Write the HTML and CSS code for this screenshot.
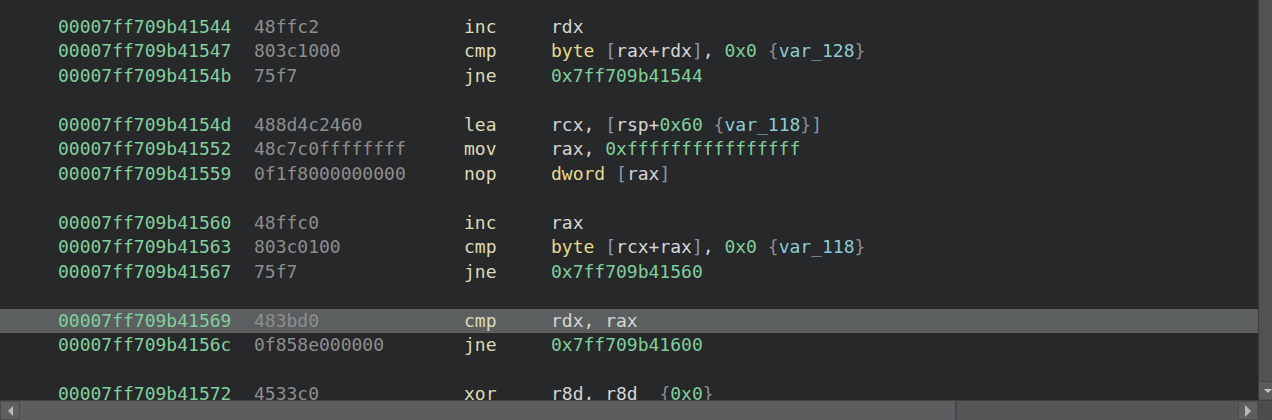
FILE: index.html
```html
<!DOCTYPE html>
<html>
<head>
<meta charset="utf-8">
<link rel="stylesheet" href="styles.css">
</head>
<body>
<div class="app">
  <div class="main">
    <div class="listing">
      <div class="row"><span class="addr">00007ff709b41544</span><span class="bytes">48ffc2</span><span class="mn">inc</span><span class="ops"><span class="reg">rdx</span></span></div>
      <div class="row"><span class="addr">00007ff709b41547</span><span class="bytes">803c1000</span><span class="mn">cmp</span><span class="ops"><span class="kw">byte</span> <span class="br">[</span><span class="reg">rax+rdx</span><span class="br">]</span><span class="reg">,</span> <span class="num">0x0</span> <span class="brace">{</span><span class="var">var_128</span><span class="brace">}</span></span></div>
      <div class="row"><span class="addr">00007ff709b4154b</span><span class="bytes">75f7</span><span class="mn">jne</span><span class="ops"><span class="num">0x7ff709b41544</span></span></div>
      <div class="row"></div>
      <div class="row"><span class="addr">00007ff709b4154d</span><span class="bytes">488d4c2460</span><span class="mn">lea</span><span class="ops"><span class="reg">rcx,</span> <span class="br">[</span><span class="reg">rsp+</span><span class="num">0x60</span> <span class="brace">{</span><span class="var">var_118</span><span class="brace">}</span><span class="br">]</span></span></div>
      <div class="row"><span class="addr">00007ff709b41552</span><span class="bytes">48c7c0ffffffff</span><span class="mn">mov</span><span class="ops"><span class="reg">rax,</span> <span class="num">0xffffffffffffffff</span></span></div>
      <div class="row"><span class="addr">00007ff709b41559</span><span class="bytes">0f1f8000000000</span><span class="mn">nop</span><span class="ops"><span class="kw">dword</span> <span class="br">[</span><span class="reg">rax</span><span class="br">]</span></span></div>
      <div class="row"></div>
      <div class="row"><span class="addr">00007ff709b41560</span><span class="bytes">48ffc0</span><span class="mn">inc</span><span class="ops"><span class="reg">rax</span></span></div>
      <div class="row"><span class="addr">00007ff709b41563</span><span class="bytes">803c0100</span><span class="mn">cmp</span><span class="ops"><span class="kw">byte</span> <span class="br">[</span><span class="reg">rcx+rax</span><span class="br">]</span><span class="reg">,</span> <span class="num">0x0</span> <span class="brace">{</span><span class="var">var_118</span><span class="brace">}</span></span></div>
      <div class="row"><span class="addr">00007ff709b41567</span><span class="bytes">75f7</span><span class="mn">jne</span><span class="ops"><span class="num">0x7ff709b41560</span></span></div>
      <div class="row"></div>
      <div class="row sel"><span class="addr">00007ff709b41569</span><span class="bytes">483bd0</span><span class="mn">cmp</span><span class="ops"><span class="reg">rdx, rax</span></span></div>
      <div class="row"><span class="addr">00007ff709b4156c</span><span class="bytes">0f858e000000</span><span class="mn">jne</span><span class="ops"><span class="num">0x7ff709b41600</span></span></div>
      <div class="row"></div>
      <div class="row"><span class="addr">00007ff709b41572</span><span class="bytes">4533c0</span><span class="mn">xor</span><span class="ops"><span class="reg">r8d, r8d</span>  <span class="brace">{</span><span class="num">0x0</span><span class="brace">}</span></span></div>
    </div>
    <div class="vscroll">
      <div class="vtrack"></div>
      <div class="vbtn"><span class="tri-down"></span></div>
    </div>
  </div>
  <div class="hscroll">
    <div class="hbtn"><span class="tri-left"></span></div>
    <div class="hthumb"></div>
    <div class="htrack"></div>
    <div class="hbtn"><span class="tri-right"></span></div>
    <div class="corner"></div>
  </div>
</div>
</body>
</html>
```

FILE: styles.css
```css
html, body {
  margin: 0;
  padding: 0;
  background: #26282a;
}
.app {
  width: 1272px;
  height: 420px;
  display: flex;
  flex-direction: column;
  overflow: hidden;
}
.main {
  height: 400px;
  display: flex;
}
.listing {
  flex: 1;
  overflow: hidden;
  padding-top: 14.5px;
  box-sizing: border-box;
  font-family: "DejaVu Sans Mono", "Liberation Mono", monospace;
  font-size: 18px;
}
.row {
  height: 24.5px;
  line-height: 24.5px;
  display: grid;
  grid-template-columns: 196px 210px 87px auto;
  padding-left: 58px;
  white-space: pre;
}
.row.sel {
  background: #5b5f60;
}
.addr { color: #82d09d; }
.bytes { color: #8e8e8e; }
.mn { color: #dedab6; }
.reg { color: #d6d6d6; }
.kw { color: #e6d98a; }
.br { color: #8d96b0; }
.num { color: #80cf9b; }
.brace { color: #8c8c8c; }
.var { color: #8ccbd5; }
.vscroll {
  width: 13px;
  border-left: 1px solid #3a3c3d;
  background: #505253;
  display: flex;
  flex-direction: column;
}
.vtrack { flex: 1; }
.vbtn {
  height: 17px;
  margin-bottom: 1px;
  background: #5a5c5d;
  border-top: 1px solid #444647;
  display: flex;
  align-items: center;
  justify-content: flex-end;
}
.tri-down {
  width: 0;
  height: 0;
  border-left: 4px solid transparent;
  border-right: 4px solid transparent;
  border-top: 4px solid #c4c6c7;
}
.hscroll {
  height: 20px;
  display: flex;
  background: #535556;
  border-top: 1px solid #3f4142;
  box-sizing: border-box;
}
.hbtn {
  width: 20px;
  background: #5d5f60;
  display: flex;
  align-items: center;
  justify-content: center;
  box-sizing: border-box;
  border: 1px solid #4a4c4d;
}
.hthumb {
  width: 937px;
  background: #5b5d5e;
  border-right: 2px solid #45474a;
  box-sizing: border-box;
}
.htrack {
  flex: 1;
  background: #545657;
}
.tri-left {
  width: 0;
  height: 0;
  border-top: 5px solid transparent;
  border-bottom: 5px solid transparent;
  border-right: 5px solid #b8babb;
}
.tri-right {
  width: 0;
  height: 0;
  border-top: 6px solid transparent;
  border-bottom: 6px solid transparent;
  border-left: 6px solid #b8babb;
}
.corner {
  width: 14px;
  background: #4a4c4d;
}
```
